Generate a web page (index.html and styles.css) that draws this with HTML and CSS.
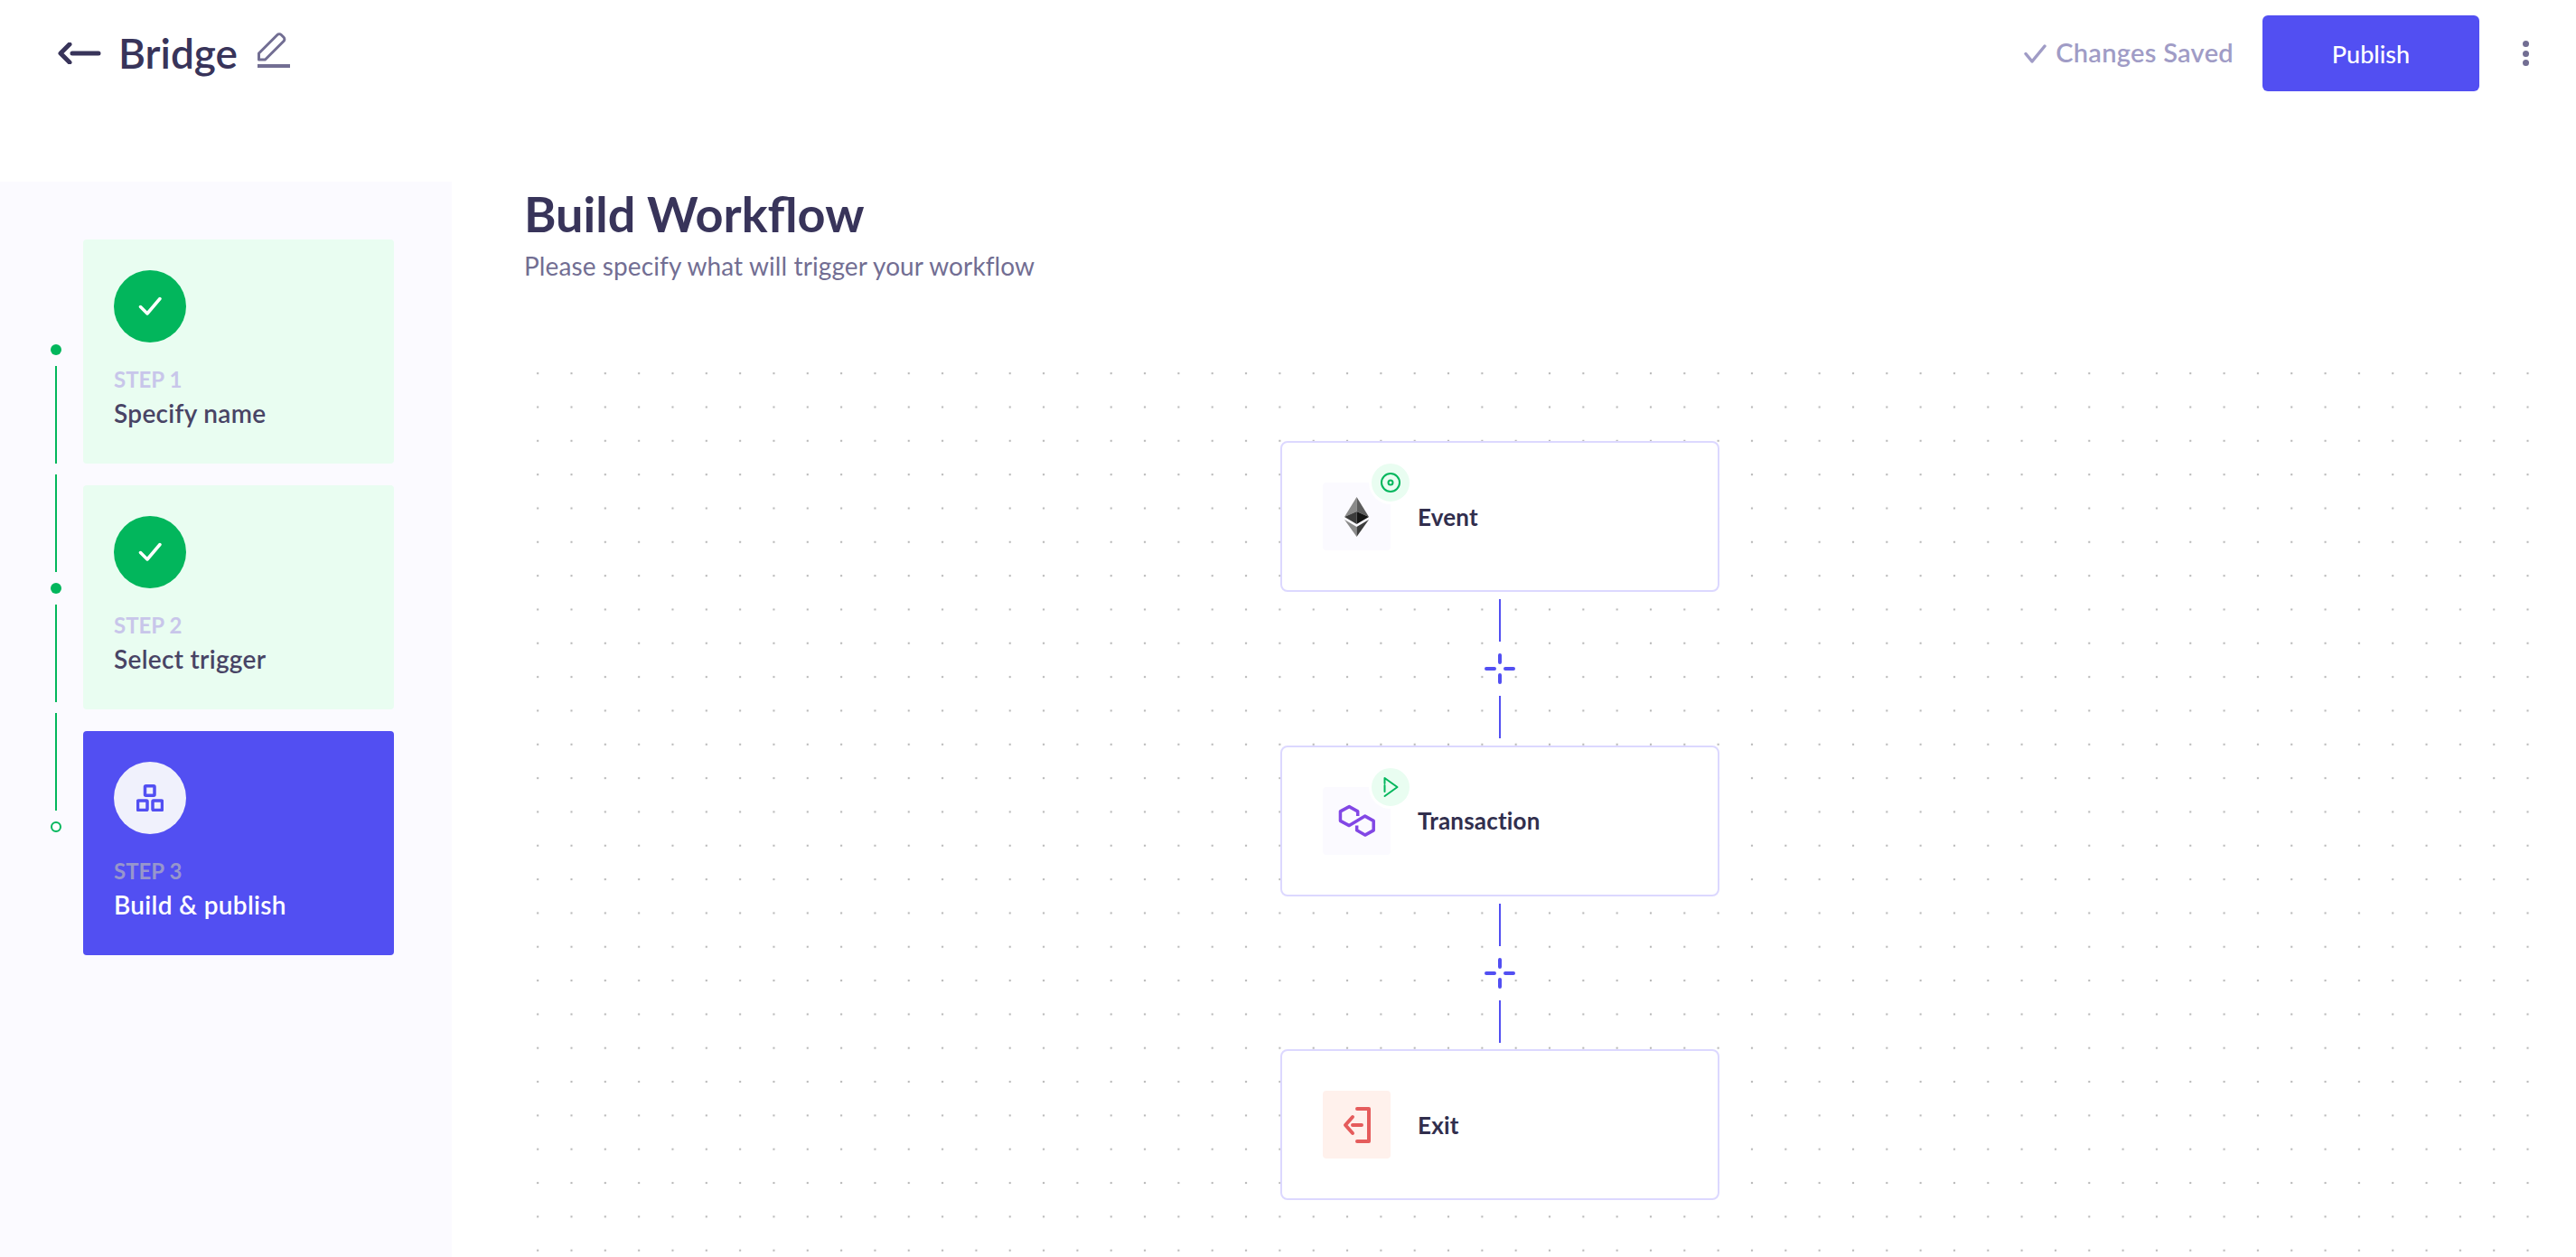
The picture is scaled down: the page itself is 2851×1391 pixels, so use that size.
FILE: index.html
```html
<!DOCTYPE html>
<html lang="en">
<head>
    <meta charset="UTF-8">
    <meta name="viewport" content="width=device-width, initial-scale=1.0">
    <title>Bridge - Build Workflow</title>
    <link rel="stylesheet" href="styles.css">
</head>
<body>

    <!-- Top bar -->
    <header class="topbar">
        <div class="topbar-left">
            <svg class="back-icon" width="48" height="24" viewBox="0 0 48 24">
                <path d="M13 2 3 12l10 10M16 12h29" fill="none" stroke="#38345a" stroke-width="5" stroke-linecap="round" stroke-linejoin="round"/>
            </svg>
            <span class="app-name">Bridge</span>
            <svg class="edit-icon" width="36" height="40" viewBox="0 0 36 40">
                <path d="M1.500 30v-7L22 2.500a3 3 0 0 1 4.200 0l2.800 2.800a3 3 0 0 1 0 4.200L8.500 30z" fill="none" stroke="#726e93" stroke-width="3" stroke-linejoin="round"/>
                <rect x="0" y="35" width="36" height="4" fill="#726e93"/>
            </svg>
        </div>
        <div class="topbar-right">
            <svg class="saved-icon" width="25" height="21" viewBox="0 0 25 21">
                <path d="M2 10.500 9 19 23 2" fill="none" stroke="#a09cc6" stroke-width="3.500" stroke-linecap="round" stroke-linejoin="round"/>
            </svg>
            <span class="saved-text">Changes Saved</span>
            <button class="publish-btn">Publish</button>
            <div class="more-dots"><i></i><i></i><i></i></div>
        </div>
    </header>

    <div class="layout">
        <!-- Steps sidebar -->
        <aside class="sidebar">
            <div class="timeline">
                <span class="dot"></span>
                <span class="seg"></span>
                <span class="seg"></span>
                <span class="dot"></span>
                <span class="seg"></span>
                <span class="seg"></span>
                <span class="dot dot-open"></span>
            </div>
            <div class="steps">
                <div class="step step-done">
                    <div class="step-circle">
                        <svg width="26" height="22" viewBox="0 0 26 22"><path d="M2.500 11.500 10 19 24 2.500" fill="none" stroke="#fff" stroke-width="3.500" stroke-linecap="round" stroke-linejoin="round"/></svg>
                    </div>
                    <div class="step-num">STEP 1</div>
                    <div class="step-name">Specify name</div>
                </div>
                <div class="step step-done">
                    <div class="step-circle">
                        <svg width="26" height="22" viewBox="0 0 26 22"><path d="M2.500 11.500 10 19 24 2.500" fill="none" stroke="#fff" stroke-width="3.500" stroke-linecap="round" stroke-linejoin="round"/></svg>
                    </div>
                    <div class="step-num">STEP 2</div>
                    <div class="step-name">Select trigger</div>
                </div>
                <div class="step step-active">
                    <div class="step-circle">
                        <svg width="30" height="30" viewBox="0 0 30 30">
                            <g fill="none" stroke="#524ff2" stroke-width="3.500">
                                <rect x="9.500" y="1.750" width="10.500" height="10.500" rx="1"/>
                                <rect x="1.500" y="18" width="10.500" height="10.500" rx="1"/>
                                <rect x="18" y="18" width="10.500" height="10.500" rx="1"/>
                            </g>
                        </svg>
                    </div>
                    <div class="step-num">STEP 3</div>
                    <div class="step-name">Build &amp; publish</div>
                </div>
            </div>
        </aside>

        <!-- Main area -->
        <main class="main">
            <h1 class="page-title">Build Workflow</h1>
            <p class="page-sub">Please specify what will trigger your workflow</p>

            <div class="canvas">
                <div class="flow">
                    <div class="node">
                        <div class="node-tile">
                            <svg width="27" height="44" viewBox="0 0 27 44">
                                <polygon points="13.500,0 0,22 13.500,16" fill="#8a8a8a"/>
                                <polygon points="13.500,0 27,22 13.500,16" fill="#5c5c5c"/>
                                <polygon points="0,22 13.500,16 13.500,30" fill="#3c3c3c"/>
                                <polygon points="27,22 13.500,16 13.500,30" fill="#141414"/>
                                <polygon points="0,25 13.500,44 13.500,33" fill="#8a8a8a"/>
                                <polygon points="27,25 13.500,44 13.500,33" fill="#3c3c3c"/>
                            </svg>
                            <span class="node-badge">
                                <svg width="24" height="24" viewBox="0 0 24 24">
                                    <circle cx="12" cy="12" r="10" fill="none" stroke="#02b65c" stroke-width="2"/>
                                    <circle cx="12" cy="12" r="2.500" fill="none" stroke="#02b65c" stroke-width="2"/>
                                </svg>
                            </span>
                        </div>
                        <span class="node-label">Event</span>
                    </div>

                    <div class="connector">
                        <span class="connector-line"></span>
                        <svg width="34" height="34" viewBox="0 0 34 34">
                            <path d="M17 2v8M17 24v8M2 17h9M23 17h9" stroke="#524ff2" stroke-width="4" stroke-linecap="round"/>
                        </svg>
                        <span class="connector-line"></span>
                    </div>

                    <div class="node">
                        <div class="node-tile">
                            <svg width="42" height="36" viewBox="248 243 120 102">
                                <path d="M310 280v-15l-27-15-28 15v30l28 15 50-30 27 15v30l-27 15-26-15v-15" fill="none" stroke="#8247e5" stroke-width="10" stroke-linejoin="round"/>
                            </svg>
                            <span class="node-badge">
                                <svg width="24" height="24" viewBox="0 0 24 24">
                                    <path d="M5.500 8V2l14 10-14 10M5.500 10v7" fill="none" stroke="#02b65c" stroke-width="2" stroke-linecap="round" stroke-linejoin="round"/>
                                </svg>
                            </span>
                        </div>
                        <span class="node-label">Transaction</span>
                    </div>

                    <div class="connector">
                        <span class="connector-line"></span>
                        <svg width="34" height="34" viewBox="0 0 34 34">
                            <path d="M17 2v8M17 24v8M2 17h9M23 17h9" stroke="#524ff2" stroke-width="4" stroke-linecap="round"/>
                        </svg>
                        <span class="connector-line"></span>
                    </div>

                    <div class="node">
                        <div class="node-tile node-tile-exit">
                            <svg width="32" height="40" viewBox="0 0 32 40">
                                <path d="M16 2h13v36H16M11 11 3 20l8 9M11 20h10" fill="none" stroke="#e55c5c" stroke-width="4" stroke-linecap="round" stroke-linejoin="round"/>
                            </svg>
                        </div>
                        <span class="node-label">Exit</span>
                    </div>
                </div>
            </div>
        </main>
    </div>

</body>
</html>
```

FILE: styles.css
```css
* {
    box-sizing: border-box;
}
html, body {
    height: 100%;
}
body {
    margin: 0;
    font-family: "Lato", "Noto Sans", sans-serif;
    color: #38345a;
    background-color: #fff;
    overflow: hidden;
}

/* top bar */
.topbar {
    height: 201px;
    padding: 17px 52px 0 64px;
    display: flex;
    justify-content: space-between;
    align-items: flex-start;
}
.topbar-left {
    display: flex;
    align-items: flex-start;
}
.back-icon {
    margin-top: 30px;
}
.app-name {
    margin-left: 19px;
    margin-top: 18px;
    font-size: 46px;
    line-height: 48px;
    font-weight: 600;
    color: #38345a;
}
.edit-icon {
    margin-left: 22px;
    margin-top: 19px;
}
.topbar-right {
    display: flex;
    align-items: center;
}
.saved-text {
    margin-left: 10px;
    font-size: 29px;
    line-height: 34px;
    padding-bottom: 2px;
    font-weight: 600;
    letter-spacing: 0.3px;
    color: #a09cc6;
}
.publish-btn {
    margin-left: 32px;
    width: 240px;
    height: 84px;
    border: none;
    border-radius: 6px;
    background-color: #524ff2;
    color: #fff;
    font-family: inherit;
    font-size: 27px;
    font-weight: 500;
}
.more-dots {
    margin-left: 48px;
    display: flex;
    flex-direction: column;
    gap: 3.500px;
}
.more-dots i {
    width: 7px;
    height: 7px;
    border-radius: 50%;
    background-color: #726e93;
}

/* sidebar */
.layout {
    display: flex;
    height: 1190px;
}
.sidebar {
    width: 500px;
    flex-shrink: 0;
    background-color: #fbfaff;
    padding-left: 56px;
    display: flex;
}
.timeline {
    width: 12px;
    padding-top: 180px;
    display: flex;
    flex-direction: column;
    align-items: center;
    gap: 12px;
}
.dot {
    width: 12px;
    height: 12px;
    border-radius: 50%;
    background-color: #02b65c;
}
.dot-open {
    background-color: #fff;
    border: 2px solid #02b65c;
}
.seg {
    width: 2px;
    height: 108px;
    background-color: #02b65c;
}
.steps {
    margin-left: 24px;
    padding-top: 64px;
    width: 344px;
    display: flex;
    flex-direction: column;
    gap: 24px;
}
.step {
    height: 248px;
    border-radius: 4px;
    padding: 34px;
}
.step-done {
    background-color: #e9fdf1;
}
.step-active {
    background-color: #524ff2;
}
.step-circle {
    width: 80px;
    height: 80px;
    border-radius: 50%;
    display: flex;
    align-items: center;
    justify-content: center;
}
.step-done .step-circle {
    background-color: #02b65c;
}
.step-active .step-circle {
    background-color: #f0f1fc;
}
.step-num {
    margin-top: 26px;
    font-size: 24px;
    line-height: 30px;
    font-weight: 700;
    color: #c8c6ea;
}
.step-active .step-num {
    color: #9796cc;
}
.step-name {
    margin-top: 4px;
    font-size: 28px;
    line-height: 36px;
    font-weight: 600;
    letter-spacing: 0.3px;
    color: #484465;
}
.step-active .step-name {
    color: #fff;
}

/* main */
.main {
    flex: 1;
    padding-left: 80px;
    min-width: 0;
}
.page-title {
    margin: 2px 0 0;
    font-size: 54px;
    line-height: 68px;
    font-weight: 700;
    color: #38345a;
}
.page-sub {
    margin: 4px 0 0;
    font-size: 28px;
    line-height: 38px;
    font-weight: 400;
    letter-spacing: 0.1px;
    color: #726e93;
}
.canvas {
    margin-top: 81px;
    margin-left: -4px;
    width: 2224px;
    height: 997px;
    padding: 94px 0 0 841px;
    background-image: radial-gradient(circle at center, #b9b9b9 1px, transparent 1.600px);
    background-size: 37.333px 37.333px;
    background-position: 0.5px 0.5px;
}
.flow {
    width: 486px;
    display: flex;
    flex-direction: column;
}
.node {
    height: 167px;
    background-color: #fff;
    border: 2px solid #dcd8ff;
    border-radius: 8px;
    padding-left: 45px;
    display: flex;
    align-items: center;
    gap: 30px;
}
.node-tile {
    position: relative;
    width: 75px;
    height: 75px;
    border-radius: 4px;
    background-color: #fbfaff;
    display: flex;
    align-items: center;
    justify-content: center;
}
.node-tile-exit {
    background-color: #fff1ec;
}
.node-badge {
    position: absolute;
    top: -24px;
    right: -24px;
    width: 48px;
    height: 48px;
    border-radius: 50%;
    background-color: #e9fdf1;
    border: 3px solid #fff;
    display: flex;
    align-items: center;
    justify-content: center;
}
.node-label {
    font-size: 26px;
    font-weight: 700;
    letter-spacing: 0.2px;
    color: #312e4d;
}
.connector {
    height: 169.500px;
    padding-top: 8px;
    display: flex;
    flex-direction: column;
    align-items: center;
    gap: 13px;
}
.connector-line {
    width: 2px;
    height: 47px;
    background-color: #524ff2;
}
```
